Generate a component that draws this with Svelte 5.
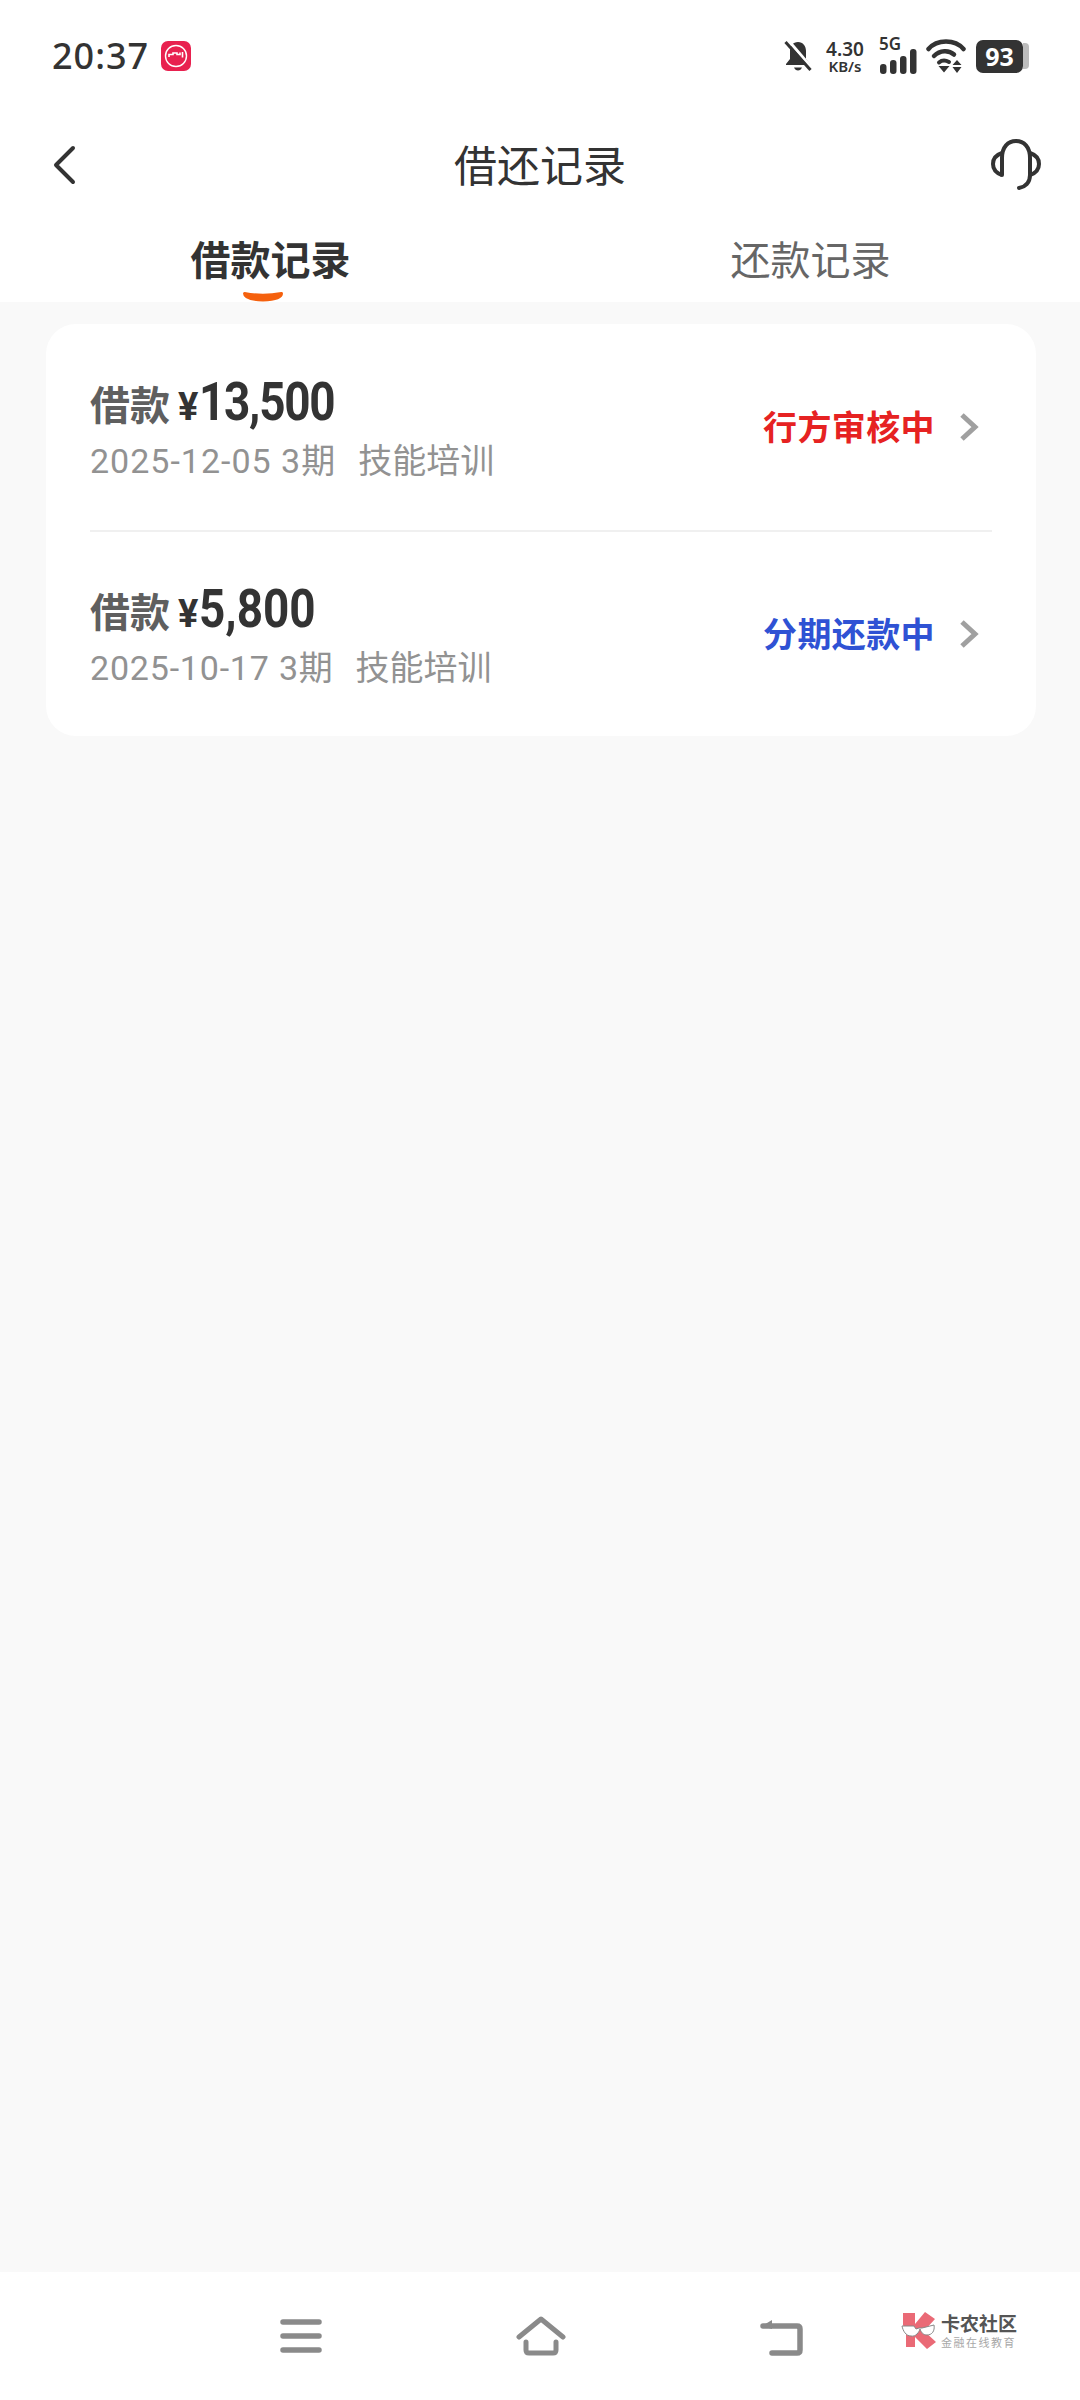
<script>
  const rows = [
    { amount: '13,500', date: '2025-12-05 3期', purpose: '技能培训', status: '行方审核中', tone: 'red', tight: true },
    { amount: '5,800', date: '2025-10-17 3期', purpose: '技能培训', status: '分期还款中', tone: 'blue', tight: false }
  ];
</script>

<div class="page">
  <header class="top">
    <div class="status">
      <span class="time">20:37</span>
      <svg class="app" viewBox="0 0 30 30" width="30" height="30">
        <rect width="30" height="30" rx="7" fill="#e8214f" />
        <circle cx="15" cy="15" r="10.5" fill="none" stroke="#fff" stroke-width="1.4" />
        <path d="M8 16v-2.500h4v-1.500h4v1.500h3v-2M21.500 11v5.500" fill="none" stroke="#fff" stroke-width="1.6" />
      </svg>
      <div class="sys">
        <svg class="bell" viewBox="0 0 28 32" width="28" height="32">
          <path d="M14 2c-5 0-8 4-8 9v8l-4 5v1h24v-1l-4-5v-8c0-5-3-9-8-9z" fill="#333" />
          <path d="M10 27.500h8c-.8 2-2.200 3-4 3s-3.200-1-4-3z" fill="#333" />
          <path d="M4 0l23 27" stroke="#fff" stroke-width="3" />
          <path d="M1.500 2l25 28" stroke="#333" stroke-width="3" />
        </svg>
        <div class="speed"><b>4.30</b><span>KB/s</span></div>
        <div class="signal">
          <span class="five">5G</span>
          <svg viewBox="0 0 38 25" width="38" height="25">
            <rect x="1" y="15" width="6.500" height="10" rx="3" fill="#333" />
            <rect x="11" y="11" width="6.500" height="14" rx="3" fill="#333" />
            <rect x="21" y="7" width="6.500" height="18" rx="3" fill="#333" />
            <rect x="31" y="0" width="6.500" height="25" rx="3" fill="#333" />
          </svg>
        </div>
        <svg class="wifi" viewBox="0 0 40 34" width="40" height="34">
          <path d="M2.500 10C11 0 29 0 37.500 10" fill="none" stroke="#333" stroke-width="4.500" stroke-linecap="round" />
          <path d="M8 17c6-6 15-6 20 -1.500" fill="none" stroke="#333" stroke-width="4.500" stroke-linecap="round" />
          <path d="M13 23.500c3-2.500 6.500-2.500 10-.5" fill="none" stroke="#333" stroke-width="4" stroke-linecap="round" />
          <path d="M12.500 27h11l-5.500 6.500zM31 21l4.500 5h-9zM26.500 28h9L31 34z" fill="#333" />
        </svg>
        <div class="battery"><span class="cell">93</span><span class="nub"></span></div>
      </div>
    </div>

    <div class="bar">
      <svg class="back" viewBox="0 0 24 40" width="24" height="40">
        <path d="M21 3L4 20l17 17" fill="none" stroke="#333" stroke-width="4" stroke-linecap="round" stroke-linejoin="round" />
      </svg>
      <h1>借还记录</h1>
      <svg class="help" viewBox="0 0 50 52" width="50" height="52">
        <path d="M11 36V19C11 8 17 2 25 2s14 6 14 17v17c0 8-5 12-11 13" fill="none" stroke="#333" stroke-width="4" stroke-linecap="round" />
        <path d="M11 14C5 16 2 20 2 25s3 9 9 11M39 14c6 2 9 6 9 11s-3 9-9 11" fill="none" stroke="#333" stroke-width="4" />
      </svg>
    </div>

    <nav class="tabs">
      <div class="tab on">
        借款记录
        <svg class="mark" viewBox="0 0 42 11" width="42" height="11">
          <path d="M2.500 2.500Q21 6 39.500 2.500Q39.500 8.500 21 9Q2.500 8.500 2.500 2.500z" fill="#f5610e" stroke="#f5610e" stroke-width="3" stroke-linejoin="round" />
        </svg>
      </div>
      <div class="tab">还款记录</div>
    </nav>
  </header>

  <main>
    <section class="card">
      {#each rows as r}
        <article class="row">
          <div class="info">
            <div class="head">
              <span class="kind">借款</span><span class="yen">¥</span><span class="amount" class:tight={r.tight}>{r.amount}</span>
            </div>
            <div class="meta"><span class="date" class:tight={r.tight}>{r.date}</span><span>{r.purpose}</span></div>
          </div>
          <span class="state {r.tone}">{r.status}</span>
          <svg class="chev" viewBox="0 0 20 30" width="20" height="30">
            <path d="M3 3l13 12L3 27" fill="none" stroke="#a0a0a0" stroke-width="5" />
          </svg>
        </article>
      {/each}
    </section>
  </main>

  <footer class="nav">
    <svg viewBox="0 0 42 34" width="42" height="34">
      <path d="M3 3h36M3 17h36M3 31h36" stroke="#8a8a8a" stroke-width="5.500" stroke-linecap="round" />
    </svg>
    <svg viewBox="0 0 50 40" width="50" height="40">
      <path d="M3 21L25 3l22 18" fill="none" stroke="#8a8a8a" stroke-width="5" stroke-linecap="round" stroke-linejoin="round" />
      <path d="M10 26v8c0 2 1 3 3 3h24c2 0 3-1 3-3v-8" fill="none" stroke="#8a8a8a" stroke-width="5" stroke-linecap="round" />
    </svg>
    <svg viewBox="0 0 44 40" width="44" height="40">
      <path d="M3 10h34c2 0 3 1 3 3v21c0 2-1 3-3 3H12" fill="none" stroke="#8a8a8a" stroke-width="5.500" stroke-linecap="round" />
      <path d="M2 10l10-6v9z" fill="#8a8a8a" />
    </svg>

    <div class="brand">
      <svg viewBox="0 0 36 38" width="36" height="38">
        <path d="M2 2h12v11L24 1l10 7-11 12 12 11-9 7-12-12v10H5v-14L2 14z" fill="#ea6a76" />
        <path d="M1 15h12l2 3 3-1 3 0 12-3c1 6-2 10-7 10-4 0-6-3-7-6-1 3-4 8-9 7-5 0-8-5-9-10z" fill="#fff" stroke="#888" stroke-width="1" />
      </svg>
      <div class="words"><b>卡农社区</b><span>金融在线教育</span></div>
    </div>
  </footer>
</div>

<style>
  :global(body) { margin: 0; background: #f9f9f9; }
  .page {
    width: 1080px; height: 2400px; display: flex; flex-direction: column;
    background: #f9f9f9; color: #333;
    font-family: "Noto Sans", "Noto Sans CJK SC", sans-serif;
  }
  .top { background: #fff; height: 302px; flex: none; }

  .status { height: 112px; display: flex; align-items: center; padding: 0 52px; box-sizing: border-box; }
  .time { font-size: 36px; font-weight: 500; letter-spacing: 1px; line-height: 1; }
  .app { margin-left: 12px; }
  .sys { margin-left: auto; display: flex; align-items: center; margin-right: -1px; }
  .bell { margin-right: 12px; }
  .speed { display: flex; flex-direction: column; align-items: center; width: 42px; line-height: 1; }
  .speed b { font-size: 19px; font-weight: 600; line-height: 20px; }
  .speed span { font-size: 15px; font-weight: 600; line-height: 15px; }
  .signal { margin-left: 13px; width: 38px; height: 36px; position: relative; display: flex; align-items: flex-end; }
  .five { position: absolute; left: 0; top: -4px; font-size: 17px; font-weight: 600; line-height: 20px; }
  .wifi { margin-left: 9px; }
  .battery { margin-left: 10px; display: flex; align-items: center; }
  .cell {
    width: 47px; height: 33px; border-radius: 7px; background: #333; color: #fff;
    font-size: 25px; font-weight: 700; display: flex; align-items: center; justify-content: center;
    line-height: 1;
  }
  .nub { width: 6px; height: 26px; background: #bdbdbd; border-radius: 0 4px 4px 0; }

  .bar { height: 106px; display: flex; align-items: center; justify-content: space-between; padding: 0 39px 0 52px; position: relative; box-sizing: border-box; }
  .bar h1 { position: absolute; left: 0; right: 0; margin: 0; text-align: center; font-size: 43px; font-weight: 400; line-height: 1; }
  .help { position: relative; }

  .tabs { display: flex; height: 84px; }
  .tab { flex: 1; display: flex; justify-content: center; padding-top: 14px; font-size: 40px; line-height: 56px; color: #666; position: relative; }
  .tab.on { font-weight: 700; color: #333; flex: 0 0 541px; }
  .mark { position: absolute; left: 50%; margin-left: -29px; bottom: 0; }

  main { flex: 1; padding: 22px 44px 0 46px; }
  .card { background: #fff; border-radius: 30px; padding: 0 44px; height: 412px; box-sizing: border-box; }
  .row { height: 206px; display: flex; align-items: center; box-sizing: border-box; }
  .row + .row { border-top: 2px solid #f0f0f0; }
  .info { flex: 1; margin-top: 2px; }
  .head { display: flex; align-items: baseline; height: 60px; }
  .kind { font-size: 40px; font-weight: 700; color: #5f5f5f; line-height: 60px; }
  .yen { font: 700 38px Roboto, sans-serif; margin-left: 8px; }
  .amount {
    font: 700 54px Roboto, sans-serif; margin-left: 1px; display: inline-block;
    transform: scaleX(.85); transform-origin: left center;
  }
  .amount.tight { letter-spacing: -1.5px; }
  .meta { display: flex; gap: 22px; margin-top: 6px; font-size: 34px; color: #929292; line-height: 50px; font-family: Roboto, "Noto Sans CJK SC", sans-serif; }
  .date { letter-spacing: .8px; }
  .date.tight { letter-spacing: 1px; }
  .state { font-size: 34px; font-weight: 700; letter-spacing: .4px; margin-right: 24px; margin-bottom: 4px; }
  .red { color: #e62222; }
  .blue { color: #2f52d4; }
  .chev { margin-right: 13px; }

  .nav { height: 128px; flex: none; background: #fff; display: flex; align-items: center; padding-left: 280px; gap: 194px; position: relative; }
  .brand { position: absolute; left: 901px; top: 37px; display: flex; align-items: center; gap: 4px; }
  .words { display: flex; flex-direction: column; line-height: 1; padding-top: 4px; }
  .words b { font-size: 19px; color: #555; line-height: 22px; }
  .words span { font-size: 11px; color: #a8a8a8; letter-spacing: 1.5px; line-height: 15px; }
</style>
